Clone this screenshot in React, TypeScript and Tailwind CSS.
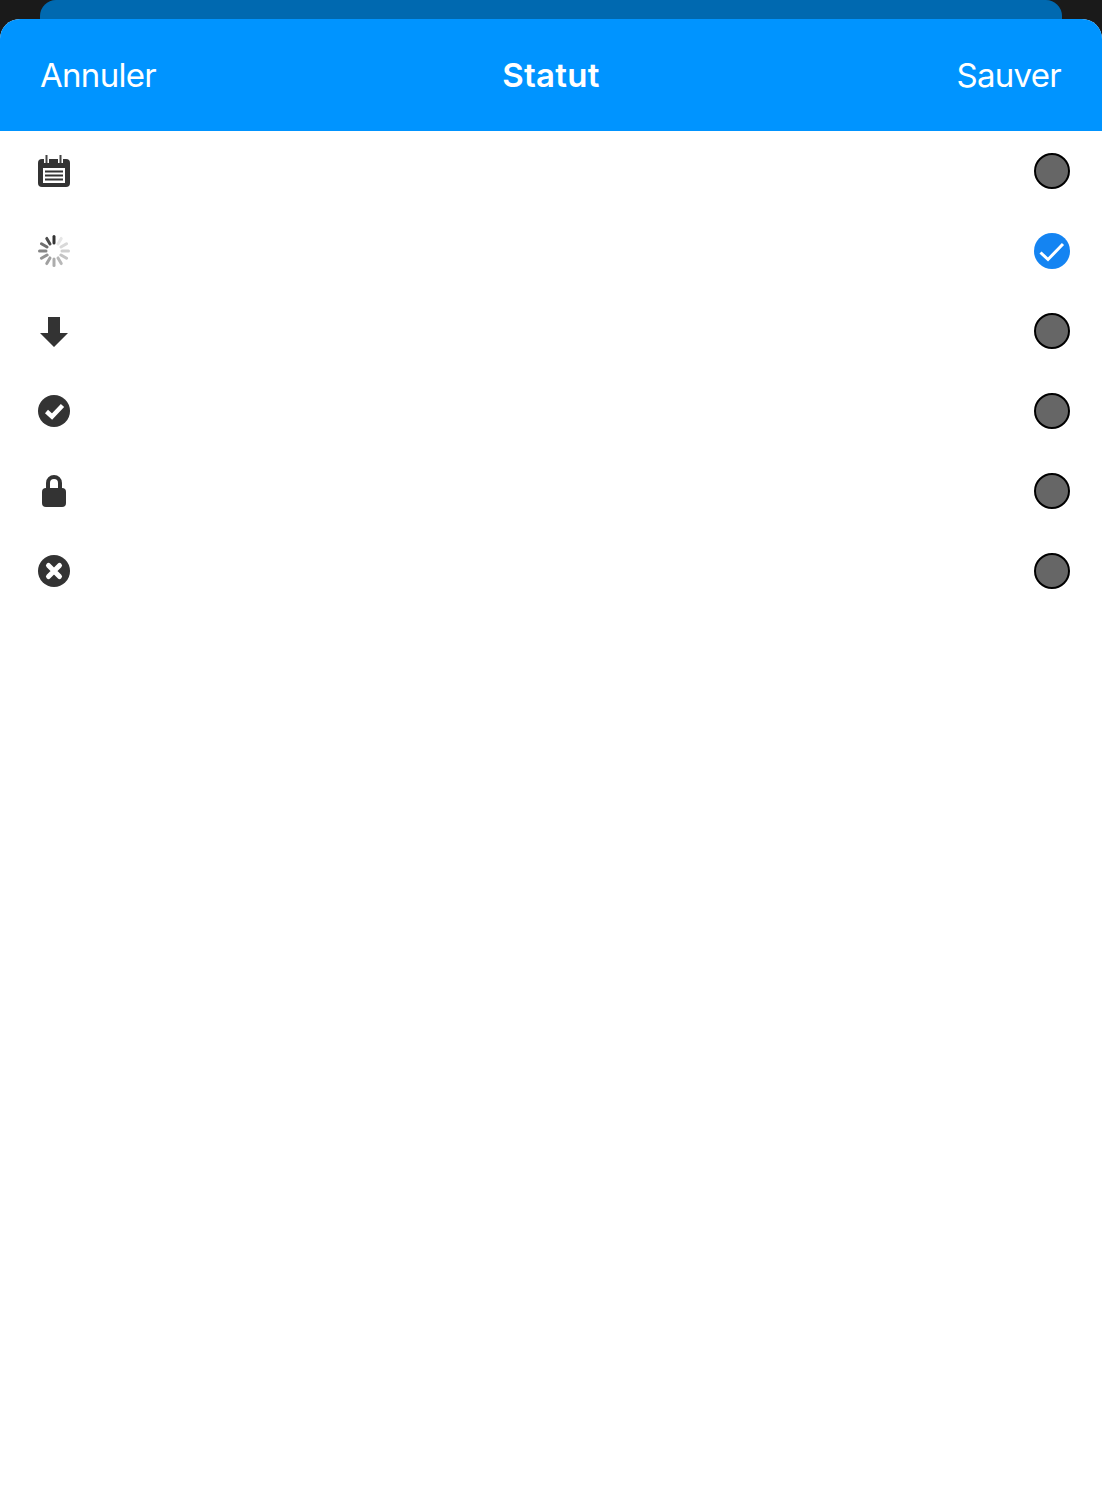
const FONT = "font-['Inter','Liberation_Sans',sans-serif]";

function CalendarIcon() {
  return (
    <svg width="32" height="32" viewBox="0 0 32 32" fill="none">
      <rect x="0" y="4" width="32" height="28" rx="4" fill="#333" />
      <rect x="6" y="3" width="5" height="5" fill="#fff" />
      <rect x="20" y="3" width="5" height="5" fill="#fff" />
      <rect x="7.500" y="0" width="2" height="8" fill="#444" />
      <rect x="21.500" y="0" width="2" height="8" fill="#444" />
      <rect x="5" y="13" width="22" height="15" fill="#fff" />
      <path d="M7 16.500h18M7 20.500h18M7 24.500h18" stroke="#333" strokeWidth="2" />
    </svg>
  );
}

function SpinnerIcon() {
  const shades = ["#333", "#e6e6e6", "#d9d9d9", "#cfcfcf", "#c4c4c4", "#b8b8b8", "#adadad", "#a0a0a0", "#939393", "#858585", "#707070", "#4d4d4d"];
  return (
    <svg width="32" height="32" viewBox="0 0 32 32">
      {shades.map((c, i) => (
        <line key={i} x1="16" y1="1.500" x2="16" y2="8" stroke={c} strokeWidth="3" strokeLinecap="round" transform={`rotate(${i * 30} 16 16)`} />
      ))}
    </svg>
  );
}

function ArrowIcon() {
  return (
    <svg width="32" height="32" viewBox="0 0 32 32">
      <path d="M10 2h12v16h8L16 32 2 18h8z" fill="#333" />
    </svg>
  );
}

function CheckIcon() {
  return (
    <svg width="32" height="32" viewBox="0 0 32 32">
      <circle cx="16" cy="16" r="16" fill="#333" />
      <path d="M8.500 16.500l5.500 5L24.500 10.500" fill="none" stroke="#fff" strokeWidth="4.500" />
    </svg>
  );
}

function LockIcon() {
  return (
    <svg width="32" height="32" viewBox="0 0 32 32">
      <path d="M10 15v-7a6 6 0 0 1 12 0v7" fill="none" stroke="#333" strokeWidth="4" />
      <rect x="4" y="13" width="24" height="19" rx="4" fill="#333" />
    </svg>
  );
}

function CrossIcon() {
  return (
    <svg width="32" height="32" viewBox="0 0 32 32">
      <circle cx="16" cy="16" r="16" fill="#333" />
      <path d="M10.500 10.500l11 11M21.500 10.500l-11 11" fill="none" stroke="#fff" strokeWidth="5" strokeLinecap="round" />
    </svg>
  );
}

const statuses = [
  { id: "planned", icon: <CalendarIcon /> },
  { id: "progress", icon: <SpinnerIcon />, selected: true },
  { id: "download", icon: <ArrowIcon /> },
  { id: "done", icon: <CheckIcon /> },
  { id: "locked", icon: <LockIcon /> },
  { id: "cancelled", icon: <CrossIcon /> },
];

function Radio({ selected }: { selected?: boolean }) {
  if (selected) {
    return (
      <div className="flex items-center justify-center w-9 h-9 rounded-full bg-[#1484f2]">
        <svg width="36" height="36" viewBox="0 0 36 36">
          <path d="M6.500 19.500l7.500 7L29 11" fill="none" stroke="#fff" strokeWidth="3" />
        </svg>
      </div>
    );
  }
  return <div className="w-9 h-9 rounded-full bg-[#666] border-2 border-black" />;
}

export default function App() {
  return (
    <div className={`${FONT} h-[1487px] bg-[#1a1a1a] overflow-hidden`}>
      {/* Sheet behind */}
      <div className="h-[19px] mx-10 rounded-t-[16px] bg-[#0069b0]" />

      <div className="h-[1468px] flex flex-col bg-white rounded-t-[20px] overflow-hidden">
        {/* Header */}
        <div className="h-[112px] shrink-0 flex items-center justify-between pt-[2px] pl-[40px] pr-[41px] bg-[#0094ff] text-white text-[33px] tracking-[-0.7px] relative">
          <span>Annuler</span>
          <span className="absolute left-0 right-0 text-center font-semibold tracking-[0.3px]">Statut</span>
          <span>Sauver</span>
        </div>

        {/* Status list */}
        <div className="flex flex-col">
          {statuses.map((s) => (
            <div key={s.id} className="h-20 flex items-center justify-between pl-[38px] pr-[32px]">
              {s.icon}
              <Radio selected={s.selected} />
            </div>
          ))}
        </div>
      </div>
    </div>
  );
}
